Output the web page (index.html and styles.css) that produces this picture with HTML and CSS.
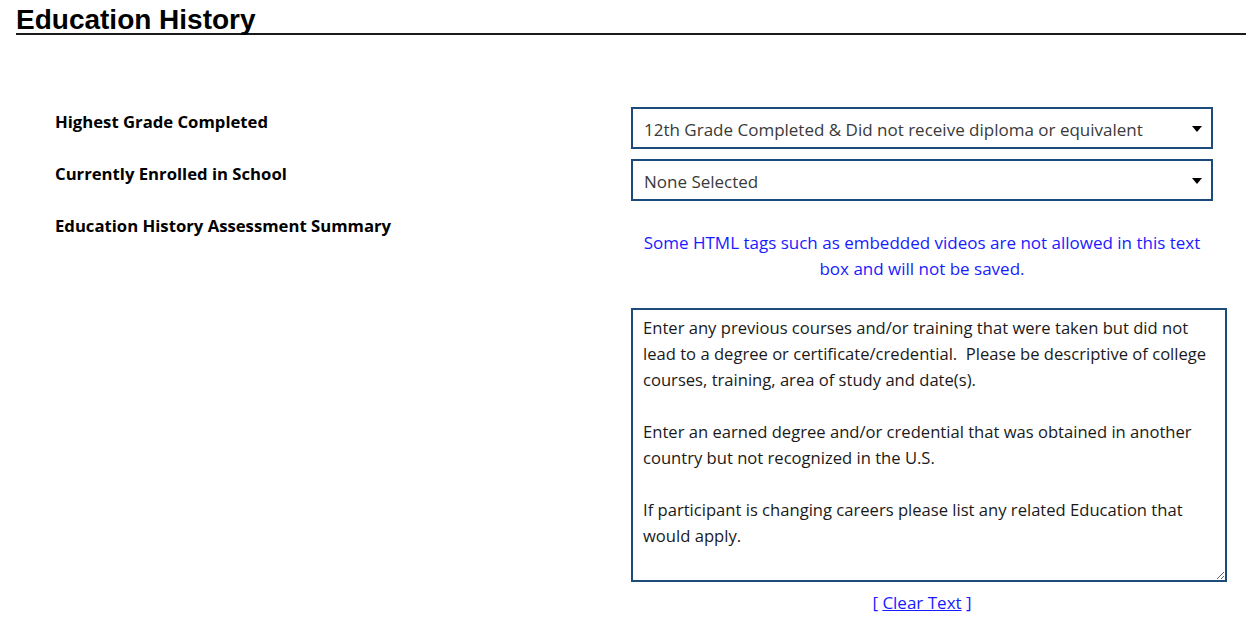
FILE: index.html
```html
<!DOCTYPE html>
<html lang="en">
<head>
    <meta charset="UTF-8">
    <meta name="viewport" content="width=device-width, initial-scale=1.0">
    <title>Education History</title>
    <link rel="stylesheet" href="styles.css">
</head>
<body>
    <h2 class="section-title">Education History</h2>
    <form class="edu-form" id="educationForm">
        <label class="field-label" for="highestGrade">Highest Grade Completed</label>
        <div class="select-wrap">
            <select id="highestGrade" class="field-select">
                <option>None Selected</option>
                <option selected>12th Grade Completed &amp; Did not receive diploma or equivalent</option>
            </select>
        </div>

        <label class="field-label" for="enrolled">Currently Enrolled in School</label>
        <div class="select-wrap">
            <select id="enrolled" class="field-select">
                <option selected>None Selected</option>
                <option>Yes</option>
                <option>No</option>
            </select>
        </div>

        <label class="field-label" for="summary">Education History Assessment Summary</label>
        <div class="summary-col">
            <p class="html-note">Some HTML tags such as embedded videos are not allowed in this text box and will not be saved.</p>
            <textarea id="summary" class="summary-box">Enter any previous courses and/or training that were taken but did not lead to a degree or certificate/credential.  Please be descriptive of college courses, training, area of study and date(s).

Enter an earned degree and/or credential that was obtained in another country but not recognized in the U.S.

If participant is changing careers please list any related Education that would apply.</textarea>
            <div class="clear-row">[ <a href="#" id="clearText">Clear Text</a> ]</div>
        </div>
    </form>
    <script>
        // Empty the summary box
        document.getElementById('clearText').addEventListener('click', function (event) {
            event.preventDefault();
            document.getElementById('summary').value = '';
        });
    </script>
</body>
</html>
```

FILE: styles.css
```css
body {
    margin: 0;
    font-family: "Open Sans", "Noto Sans", sans-serif;
    font-size: 17px;
    color: #000;
    background-color: #fff;
}
.section-title {
    margin: 7px 6px 0 16px;
    font-family: "Liberation Sans", Arial, sans-serif;
    font-size: 28px;
    line-height: 26px;
    font-weight: bold;
    color: #000;
    border-bottom: 2px solid #1a1a1a;
}
.edu-form {
    display: grid;
    grid-template-columns: 576px 596px;
    row-gap: 10px;
    margin: 72px 0 0 55px;
}
.field-label {
    padding-top: 2px;
    line-height: 26px;
    font-weight: bold;
    font-size: 16.7px;
}
.select-wrap {
    position: relative;
    width: 582px;
}
.select-wrap::after {
    content: "";
    position: absolute;
    right: 11px;
    top: 19px;
    border-left: 5px solid transparent;
    border-right: 5px solid transparent;
    border-top: 6px solid #000;
    pointer-events: none;
}
.field-select {
    width: 100%;
    height: 42px;
    padding: 2px 30px 0 11px;
    border: 2px solid #1c4b7c;
    border-radius: 0;
    background: #fff;
    color: #3a3a3a;
    font-family: inherit;
    font-size: 17px;
    appearance: none;
    -webkit-appearance: none;
}
.summary-col {
    display: flex;
    flex-direction: column;
}
.html-note {
    width: 582px;
    margin: 19px 0 0;
    color: #1a1aff;
    text-align: center;
    line-height: 26px;
}
.summary-box {
    box-sizing: border-box;
    width: 596px;
    height: 274px;
    margin-top: 26px;
    padding: 5px 10px;
    border: 2px solid #1c4b7c;
    border-radius: 0;
    font-family: inherit;
    font-size: 16.6px;
    line-height: 26px;
    color: #1a1a1a;
}
.clear-row {
    width: 582px;
    margin-top: 8px;
    text-align: center;
    line-height: 26px;
    color: #1a1aff;
}
.clear-row a {
    color: #1a1aff;
}
```
